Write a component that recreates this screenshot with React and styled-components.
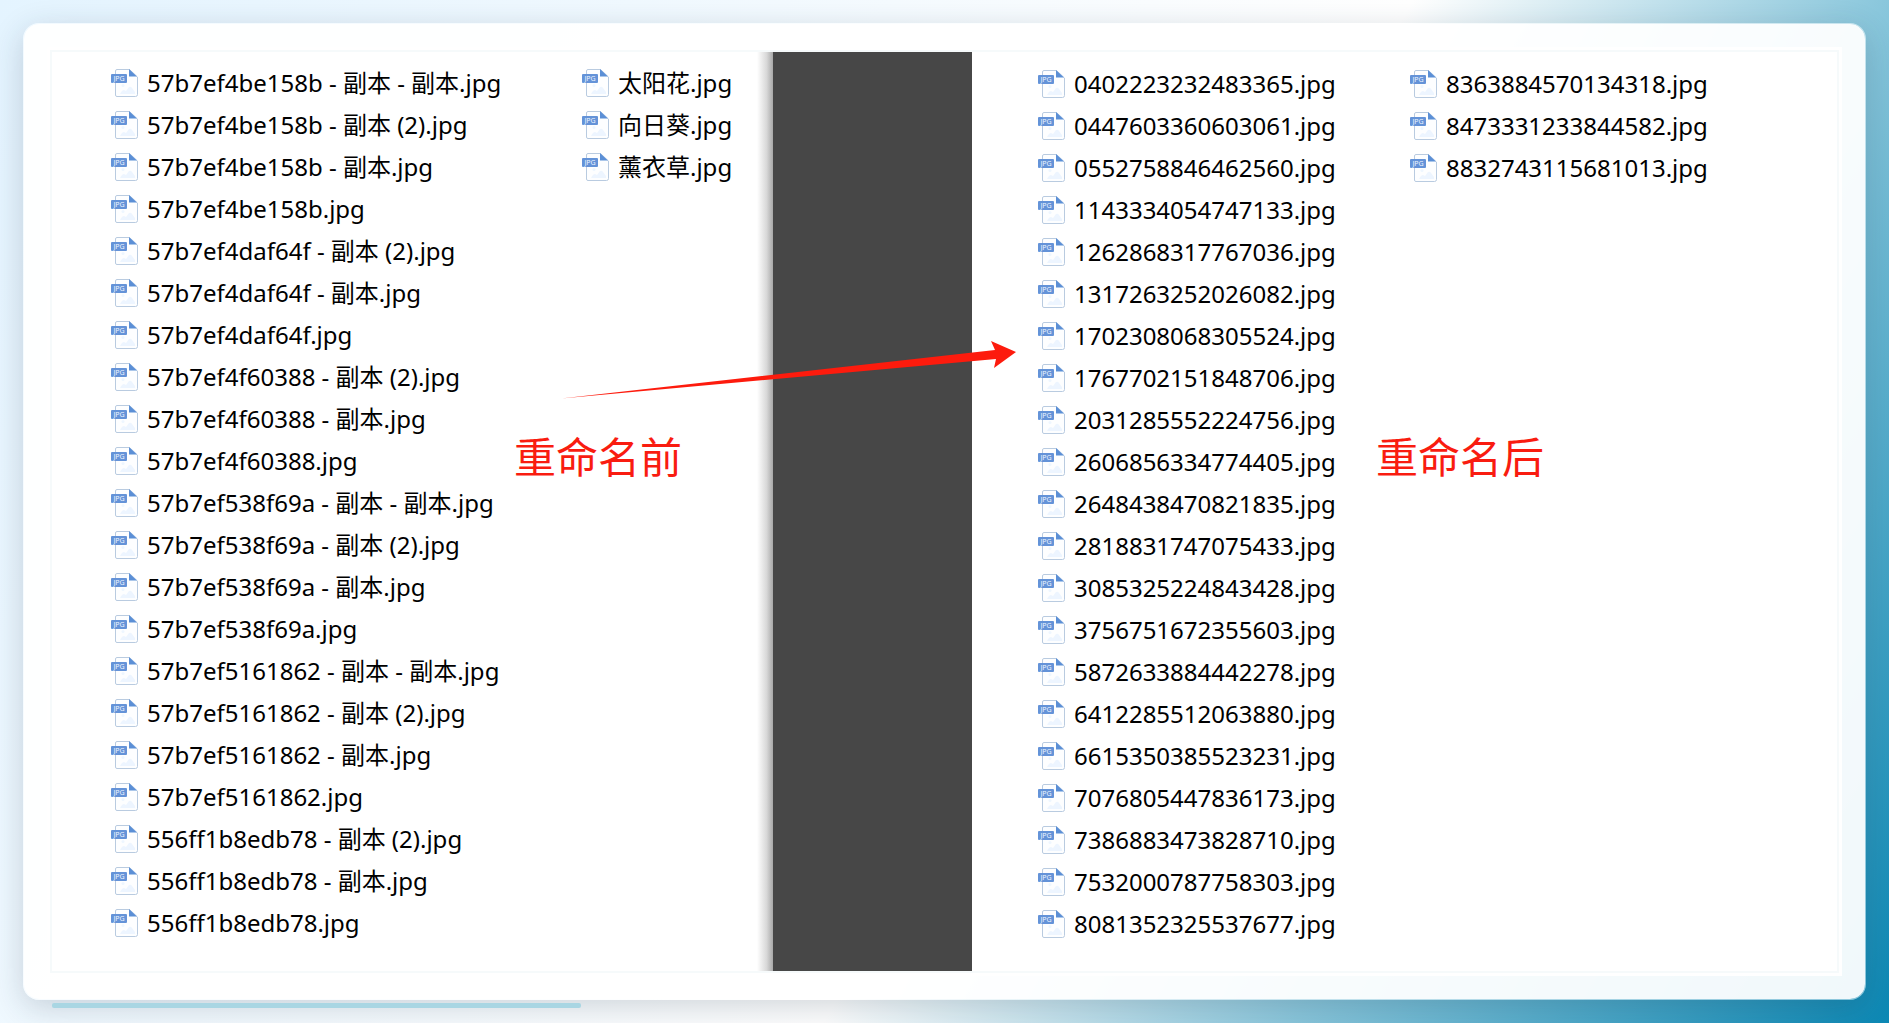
import styled, { createGlobalStyle } from 'styled-components';

const beforeFiles = [
  '57b7ef4be158b - 副本 - 副本.jpg',
  '57b7ef4be158b - 副本 (2).jpg',
  '57b7ef4be158b - 副本.jpg',
  '57b7ef4be158b.jpg',
  '57b7ef4daf64f - 副本 (2).jpg',
  '57b7ef4daf64f - 副本.jpg',
  '57b7ef4daf64f.jpg',
  '57b7ef4f60388 - 副本 (2).jpg',
  '57b7ef4f60388 - 副本.jpg',
  '57b7ef4f60388.jpg',
  '57b7ef538f69a - 副本 - 副本.jpg',
  '57b7ef538f69a - 副本 (2).jpg',
  '57b7ef538f69a - 副本.jpg',
  '57b7ef538f69a.jpg',
  '57b7ef5161862 - 副本 - 副本.jpg',
  '57b7ef5161862 - 副本 (2).jpg',
  '57b7ef5161862 - 副本.jpg',
  '57b7ef5161862.jpg',
  '556ff1b8edb78 - 副本 (2).jpg',
  '556ff1b8edb78 - 副本.jpg',
  '556ff1b8edb78.jpg',
];

const beforeExtra = ['太阳花.jpg', '向日葵.jpg', '薰衣草.jpg'];

const afterFiles = [
  '0402223232483365.jpg',
  '0447603360603061.jpg',
  '0552758846462560.jpg',
  '1143334054747133.jpg',
  '1262868317767036.jpg',
  '1317263252026082.jpg',
  '1702308068305524.jpg',
  '1767702151848706.jpg',
  '2031285552224756.jpg',
  '2606856334774405.jpg',
  '2648438470821835.jpg',
  '2818831747075433.jpg',
  '3085325224843428.jpg',
  '3756751672355603.jpg',
  '5872633884442278.jpg',
  '6412285512063880.jpg',
  '6615350385523231.jpg',
  '7076805447836173.jpg',
  '7386883473828710.jpg',
  '7532000787758303.jpg',
  '8081352325537677.jpg',
];

const afterExtra = ['8363884570134318.jpg', '8473331233844582.jpg', '8832743115681013.jpg'];

const JpgIcon = () => (
  <IconSvg viewBox="0 0 27 28" aria-hidden="true">
    <path d="M6 .5h12.500L26.500 8v17.500a2 2 0 0 1-2 2H6a1.500 1.500 0 0 1-1.500-1.500V2A1.500 1.500 0 0 1 6 .5z" fill="#fdfeff" stroke="#b9cbe0" />
    <path d="M18 0v7.500h8z" fill="#5b8fd6" />
    <circle cx="12" cy="16.500" r="1.500" fill="#eef6ff" />
    <path d="M9 25q2-4 4-4l2 1 3-4q2-1 3 1l3 4v2z" fill="#edf5ff" />
    <rect x="0" y="5" width="16" height="9" rx="1" fill="#6493d8" />
    <text x="8" y="12" textAnchor="middle" fontSize="7" fill="#eef5ff">JPG</text>
  </IconSvg>
);

const FileList = ({ files }) => (
  <List>
    {files.map((name) => (
      <FileItem key={name}>
        <JpgIcon />
        <span>{name}</span>
      </FileItem>
    ))}
  </List>
);

const App = () => (
  <>
    <GlobalStyle />
    <Page>
      <Card>
        <Frame>
          <BeforePanel>
            <FileList files={beforeFiles} />
            <FileList files={beforeExtra} />
            <Caption $left="462px">重命名前</Caption>
          </BeforePanel>
          <Divider />
          <AfterPanel>
            <FileList files={afterFiles} />
            <FileList files={afterExtra} />
            <Caption $left="404px">重命名后</Caption>
          </AfterPanel>
          {/* 重命名前 -> 重命名后 箭头 */}
          <Arrow viewBox="0 0 456 58" aria-hidden="true">
            <path d="M0 57.500L434 9l-4-9 25 11-22 16 2-9z" fill="#fd1b0d" />
          </Arrow>
        </Frame>
      </Card>
      <Accent />
    </Page>
  </>
);

const GlobalStyle = createGlobalStyle`
  * {
    box-sizing: border-box;
  }

  body {
    margin: 0;
    font-family: 'Noto Sans', 'Noto Sans CJK SC', sans-serif;
    color: #000;
  }
`;

const Page = styled.main`
  position: relative;
  display: flex;
  min-height: 100vh;
  padding: 23px;
  background: linear-gradient(120deg, #e4f4ff 0%, #fff 57%, #8ac7dc 76%, #0c88b4 100%);
`;

const Card = styled.section`
  display: flex;
  flex: 1;
  min-width: 0;
  padding: 23px;
  border: 1px solid rgba(255, 255, 255, 0.5);
  border-radius: 16px;
  background: rgba(255, 255, 255, 0.94);
  background-clip: padding-box;
  box-shadow: 0 8px 32px rgba(30, 50, 70, 0.2);
`;

const Frame = styled.div`
  position: relative;
  display: flex;
  flex: 1;
  min-width: 0;
  padding: 5px;
  background: #fff;

  /* 안쪽 연한 테두리 */
  &::before {
    content: '';
    position: absolute;
    inset: 3px;
    border: 2px solid #f6fafb;
  }
`;

const Panel = styled.div`
  position: relative;
  display: grid;
  align-items: start;
`;

const BeforePanel = styled(Panel)`
  flex: 0 1 721px;
  grid-template-columns: 471px 1fr;
  padding: 10px 0 0 59px;
`;

const AfterPanel = styled(Panel)`
  flex: 1;
  grid-template-columns: 372px 1fr;
  padding: 11px 0 0 66px;
`;

const Divider = styled.div`
  position: relative;
  flex: 0 0 199px;
  background: #474747;

  &::before {
    content: '';
    position: absolute;
    top: 0;
    bottom: 0;
    right: 100%;
    width: 16px;
    background: linear-gradient(to left, #a8a8a8, #d8d8d8 40%, #fff);
  }
`;

const List = styled.ul`
  margin: 0;
  padding: 0;
  list-style: none;
`;

const FileItem = styled.li`
  display: flex;
  align-items: center;
  gap: 9px;
  height: 42px;
  font-size: 24px;
  line-height: 42px;
  white-space: nowrap;
`;

const IconSvg = styled.svg`
  flex: none;
  width: 27px;
  height: 28px;
`;

const Caption = styled.strong`
  position: absolute;
  top: 377px;
  left: ${({ $left }) => $left};
  font-size: 42px;
  font-weight: 400;
  line-height: 56px;
  color: #f91c10;
`;

const Arrow = styled.svg`
  position: absolute;
  top: 294px;
  left: 514px;
  width: 456px;
  height: 58px;
`;

const Accent = styled.div`
  position: absolute;
  bottom: 15px;
  left: 52px;
  width: 28%;
  height: 5px;
  border-radius: 2px;
  background: #a9d6e3;
`;

export default App;
